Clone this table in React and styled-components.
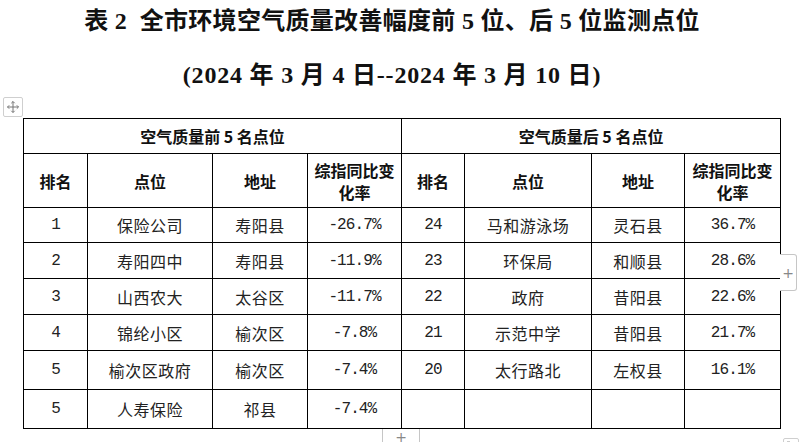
import styled, { createGlobalStyle } from 'styled-components';

const GlobalStyle = createGlobalStyle`
  html, body {
    margin: 0;
    padding: 0;
    background: #fff;
  }
  body {
    font-family: "Noto Sans CJK SC", sans-serif;
    color: #000;
  }
`;

const Page = styled.div`
  position: relative;
  width: 801px;
  height: 442px;
  overflow: hidden;
  background: #fff;
`;

const Heading = styled.h1`
  margin: 0;
  padding-right: 17px;
  text-align: center;
  white-space: pre;
  font: 700 24px/42px "Liberation Serif", "Noto Sans CJK SC", serif;
  letter-spacing: ${(p) => p.$spacing || 0}px;
  color: #111;
`;

const SubHeading = styled(Heading).attrs({ as: 'h2' })`
  margin-top: 12px;
`;

const TableWrap = styled.div`
  position: relative;
  width: 757px;
  margin: 22px 0 0 23px;
`;

const Table = styled.table`
  width: 757px;
  border-collapse: collapse;
  table-layout: fixed;
`;

const Row = styled.tr`
  height: ${(p) => p.$h}px;
`;

const HeadCell = styled.th`
  border: 1px solid #000;
  padding: 0;
  text-align: center;
  vertical-align: middle;
  font: 700 16px/22px "Noto Sans CJK SC", sans-serif;
  color: #111;
`;

const Cell = styled.td`
  border: 1px solid #000;
  padding: 0;
  text-align: center;
  vertical-align: middle;
  color: #222;
  font-family: ${(p) => (p.$mono ? '"Liberation Mono", monospace' : '"Noto Sans CJK SC", sans-serif')};
  font-size: 16px;
  letter-spacing: ${(p) => (p.$mono ? '-0.9px' : '0.5px')};
  line-height: 20px;
`;

const MoveHandle = styled.div`
  position: absolute;
  left: -20px;
  top: -21px;
  width: 18px;
  height: 18px;
  border: 1px solid #cfcfcf;
  border-radius: 2px;
  display: flex;
  align-items: center;
  justify-content: center;
  background: #fff;
`;

const SideAdd = styled.div`
  position: absolute;
  left: 757px;
  top: 136px;
  width: 16px;
  height: 35px;
  border: 1px solid #c6c6c6;
  border-left: none;
  border-radius: 0 3px 3px 0;
  display: flex;
  align-items: center;
  justify-content: center;
  color: #888;
  font: 400 14px/1 "DejaVu Sans", sans-serif;
  background: #fff;
`;

const BottomAdd = styled.div`
  position: absolute;
  left: 359px;
  top: 311px;
  width: 36px;
  height: 20px;
  border-left: 1px solid #c6c6c6;
  border-right: 1px solid #c6c6c6;
  display: flex;
  justify-content: center;
  color: #888;
  font: 400 14px/1 "DejaVu Sans", sans-serif;
  padding-top: 1px;
`;

const ResizeGrip = styled.div`
  position: absolute;
  left: 760px;
  top: 320px;
  width: 14px;
  height: 14px;
  border: 1px solid #cfcfcf;
  border-radius: 2px;
  display: flex;
  align-items: center;
  justify-content: center;
`;

const MoveIcon = () => (
  <svg width="14" height="14" viewBox="0 0 14 14" fill="none" stroke="#777" strokeWidth="1">
    <path d="M7 1.5v11M1.5 7h11" />
    <path d="M5.3 3.2L7 1.5l1.7 1.7M5.3 10.8L7 12.5l1.7-1.7M3.2 5.3L1.5 7l1.7 1.7M10.8 5.3L12.5 7l-1.7 1.7" />
  </svg>
);

const GripIcon = () => (
  <svg width="12" height="12" viewBox="0 0 12 12" fill="none" stroke="#999" strokeWidth="1">
    <path d="M2 2l8 8M2 2h3M2 2v3M10 10H7M10 10V7" />
  </svg>
);

const best = [
  ['1', '保险公司', '寿阳县', '-26.7%'],
  ['2', '寿阳四中', '寿阳县', '-11.9%'],
  ['3', '山西农大', '太谷区', '-11.7%'],
  ['4', '锦纶小区', '榆次区', '-7.8%'],
  ['5', '榆次区政府', '榆次区', '-7.4%'],
  ['5', '人寿保险', '祁县', '-7.4%'],
];

const worst = [
  ['24', '马和游泳场', '灵石县', '36.7%'],
  ['23', '环保局', '和顺县', '28.6%'],
  ['22', '政府', '昔阳县', '22.6%'],
  ['21', '示范中学', '昔阳县', '21.7%'],
  ['20', '太行路北', '左权县', '16.1%'],
  ['', '', '', ''],
];

const rowHeights = [35, 36, 36, 36, 39, 39];
const colWidths = [64, 125, 95, 94, 63, 127, 93, 96];

const Half = ({ row }) => (
  <>
    <Cell $mono>{row[0]}</Cell>
    <Cell>{row[1]}</Cell>
    <Cell>{row[2]}</Cell>
    <Cell $mono>{row[3]}</Cell>
  </>
);

const ColumnHeads = () => (
  <>
    <HeadCell>排名</HeadCell>
    <HeadCell>点位</HeadCell>
    <HeadCell>地址</HeadCell>
    <HeadCell>
      综指同比变
      <br />
      化率
    </HeadCell>
  </>
);

export default function App() {
  return (
    <Page>
      <GlobalStyle />
      <Heading $spacing={0.3}>表 2  全市环境空气质量改善幅度前 5 位、后 5 位监测点位</Heading>
      <SubHeading $spacing={0.8}>(2024 年 3 月 4 日--2024 年 3 月 10 日)</SubHeading>
      <TableWrap>
        <MoveHandle>
          <MoveIcon />
        </MoveHandle>
        <Table>
          <colgroup>
            {colWidths.map((w, i) => (
              <col key={i} style={{ width: w }} />
            ))}
          </colgroup>
          <tbody>
            <Row $h={35}>
              <HeadCell colSpan={4}>空气质量前 5 名点位</HeadCell>
              <HeadCell colSpan={4}>空气质量后 5 名点位</HeadCell>
            </Row>
            <Row $h={54}>
              <ColumnHeads />
              <ColumnHeads />
            </Row>
            {best.map((row, i) => (
              <Row key={i} $h={rowHeights[i]}>
                <Half row={row} />
                <Half row={worst[i]} />
              </Row>
            ))}
          </tbody>
        </Table>
        <SideAdd>+</SideAdd>
        <BottomAdd>+</BottomAdd>
        <ResizeGrip>
          <GripIcon />
        </ResizeGrip>
      </TableWrap>
    </Page>
  );
}
